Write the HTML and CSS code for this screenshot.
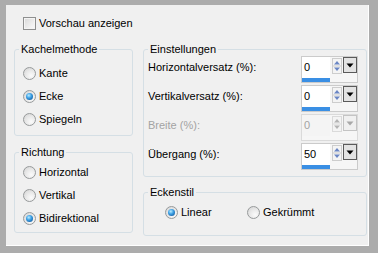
FILE: index.html
```html
<!DOCTYPE html>
<html lang="de">
<head>
<meta charset="utf-8">
<title>Kacheln</title>
<link rel="stylesheet" href="styles.css">
</head>
<body>
<div class="dialog">
  <label class="check-row"><span class="checkbox"></span>Vorschau anzeigen</label>
  <div class="columns">
    <div class="col-left">
      <fieldset class="group g-method">
        <legend>Kachelmethode</legend>
        <div class="radio-list">
          <div class="opt"><span class="radio"></span>Kante</div>
          <div class="opt"><span class="radio on"></span>Ecke</div>
          <div class="opt"><span class="radio"></span>Spiegeln</div>
        </div>
      </fieldset>
      <fieldset class="group g-dir">
        <legend>Richtung</legend>
        <div class="radio-list">
          <div class="opt"><span class="radio"></span>Horizontal</div>
          <div class="opt"><span class="radio"></span>Vertikal</div>
          <div class="opt"><span class="radio on"></span>Bidirektional</div>
        </div>
      </fieldset>
    </div>
    <div class="col-right">
      <fieldset class="group g-settings">
        <legend>Einstellungen</legend>
        <div class="settings">
          <div class="field-row">
            <span class="flabel">Horizontalversatz (%):</span>
            <div class="spin">
              <div class="num"><div class="val">0</div><div class="bar"></div></div>
              <svg class="arrows" width="10" height="16" viewBox="0 0 10 16"><rect x="0.5" y="0.5" width="9" height="15" fill="#f4f4f4" stroke="#cdcdcd"/><line x1="1" y1="8" x2="9" y2="8" stroke="#cdcdcd"/><path d="M2 6.5h6L5 3z" fill="#6a86c4"/><path d="M2 9.5h6l-3 3.5z" fill="#6a86c4"/></svg>
              <svg class="drop" width="14" height="16" viewBox="0 0 14 16"><rect x="0.5" y="0.5" width="13" height="15" fill="#e3e3e3" stroke="#5a5a5a"/><path d="M3.5 6.5h7L7 10.5z" fill="#000"/></svg>
            </div>
          </div>
          <div class="field-row">
            <span class="flabel">Vertikalversatz (%):</span>
            <div class="spin">
              <div class="num"><div class="val">0</div><div class="bar"></div></div>
              <svg class="arrows" width="10" height="16" viewBox="0 0 10 16"><rect x="0.5" y="0.5" width="9" height="15" fill="#f4f4f4" stroke="#cdcdcd"/><line x1="1" y1="8" x2="9" y2="8" stroke="#cdcdcd"/><path d="M2 6.5h6L5 3z" fill="#6a86c4"/><path d="M2 9.5h6l-3 3.5z" fill="#6a86c4"/></svg>
              <svg class="drop" width="14" height="16" viewBox="0 0 14 16"><rect x="0.5" y="0.5" width="13" height="15" fill="#e3e3e3" stroke="#5a5a5a"/><path d="M3.5 6.5h7L7 10.5z" fill="#000"/></svg>
            </div>
          </div>
          <div class="field-row disabled">
            <span class="flabel">Breite (%):</span>
            <div class="spin">
              <div class="num"><div class="val">0</div><div class="bar"></div></div>
              <svg class="arrows" width="10" height="16" viewBox="0 0 10 16"><rect x="0.5" y="0.5" width="9" height="15" fill="#f4f4f4" stroke="#dadada"/><line x1="1" y1="8" x2="9" y2="8" stroke="#dadada"/><path d="M2 6.5h6L5 3z" fill="#b4b4b4"/><path d="M2 9.5h6l-3 3.5z" fill="#b4b4b4"/></svg>
              <svg class="drop" width="14" height="16" viewBox="0 0 14 16"><rect x="0.5" y="0.5" width="13" height="15" fill="#f0f0f0" stroke="#c4c4c4"/><path d="M3.5 6.5h7L7 10.5z" fill="#a8a8a8"/></svg>
            </div>
          </div>
          <div class="field-row">
            <span class="flabel">Übergang (%):</span>
            <div class="spin">
              <div class="num"><div class="val">50</div><div class="bar"></div></div>
              <svg class="arrows" width="10" height="16" viewBox="0 0 10 16"><rect x="0.5" y="0.5" width="9" height="15" fill="#f4f4f4" stroke="#cdcdcd"/><line x1="1" y1="8" x2="9" y2="8" stroke="#cdcdcd"/><path d="M2 6.5h6L5 3z" fill="#6a86c4"/><path d="M2 9.5h6l-3 3.5z" fill="#6a86c4"/></svg>
              <svg class="drop" width="14" height="16" viewBox="0 0 14 16"><rect x="0.5" y="0.5" width="13" height="15" fill="#e3e3e3" stroke="#5a5a5a"/><path d="M3.5 6.5h7L7 10.5z" fill="#000"/></svg>
            </div>
          </div>
        </div>
      </fieldset>
      <fieldset class="group g-corner">
        <legend>Eckenstil</legend>
        <div class="corner-list">
          <div class="opt linear"><span class="radio on"></span>Linear</div>
          <div class="opt"><span class="radio"></span>Gekrümmt</div>
        </div>
      </fieldset>
    </div>
  </div>
</div>
</body>
</html>
```

FILE: styles.css
```css
* { box-sizing: border-box; }

body {
  margin: 0;
  background: #acacac;
  font-family: "Liberation Sans", Arial, sans-serif;
  font-size: 11px;
  color: #000;
  height: 253px;
}

.dialog {
  margin: 5px 0 0 6px;
  width: 363px;
  height: 241px;
  background: #f0f0f0;
  border-right: 1px solid #fff;
  border-bottom: 1px solid #fff;
  padding: 12px 0 0 8px;
}

.check-row {
  display: flex;
  align-items: center;
  gap: 3px;
  margin-left: 9px;
  height: 13px;
  line-height: 13px;
}

.checkbox {
  width: 13px;
  height: 13px;
  border: 1px solid #8e8f8f;
  background: linear-gradient(135deg, #d8d8d8 0%, #eeeeee 60%, #fbfbfb 100%);
  box-shadow: inset 0 0 0 1px #f4f4f4;
}

.columns {
  display: flex;
  gap: 10px;
  margin-top: 13px;
}

.col-left {
  width: 119px;
  display: flex;
  flex-direction: column;
  gap: 10px;
}

.col-right {
  width: 224px;
  display: flex;
  flex-direction: column;
  gap: 9px;
}

.group {
  margin: 0;
  padding: 0;
  min-width: 0;
  border: 1px solid #d5dfe5;
  border-radius: 3px;
}

.group legend {
  margin-left: 4px;
  padding: 0 2px;
  height: 13px;
  line-height: 13px;
}

.radio-list {
  display: flex;
  flex-direction: column;
  gap: 10px;
  padding-left: 8px;
}

.g-method .radio-list { padding-top: 11px; padding-bottom: 9px; }
.g-dir .radio-list { padding-top: 7px; padding-bottom: 7px; }

.opt {
  display: flex;
  align-items: center;
  gap: 3px;
  height: 13px;
  line-height: 13px;
}

.radio {
  position: relative;
  width: 13px;
  height: 13px;
  border-radius: 50%;
  border: 1px solid #979a9b;
  background: radial-gradient(circle at 65% 70%, #fbfbfb 0%, #e8e8e8 50%, #d2d2d2 100%);
  flex: none;
}

.radio.on::after {
  content: "";
  position: absolute;
  left: 2px;
  top: 2px;
  width: 7px;
  height: 7px;
  border-radius: 50%;
  background: radial-gradient(circle at 40% 35%, #b9ecff 0%, #3fa2e6 40%, #1763a8 80%, #0f4a82 100%);
}

.settings {
  display: flex;
  flex-direction: column;
  gap: 2px;
  padding: 0 8px 6px 4px;
}

.field-row {
  display: flex;
  justify-content: space-between;
  align-items: flex-start;
  height: 27px;
}

.flabel {
  padding-top: 5px;
  line-height: 13px;
}

.spin {
  display: flex;
  align-items: flex-start;
  width: 57px;
  height: 27px;
  border: 1px solid #cbcbcb;
  background: #f6f6f6;
}

.num {
  width: 28px;
  display: flex;
  flex-direction: column;
}

.val {
  height: 21px;
  line-height: 21px;
  padding-left: 2px;
  background: #fff;
}

.bar {
  height: 4px;
  background: #3a8fe4;
}

.arrows {
  margin-left: 2px;
  margin-top: 1px;
  display: block;
}

.drop {
  margin-left: 1px;
  display: block;
}

.disabled .flabel,
.disabled .val {
  color: #a3a3a3;
}

.disabled .spin {
  border-color: #dadada;
}

.disabled .val {
  background: #f4f4f4;
}

.disabled .bar {
  background: transparent;
}

.corner-list {
  display: flex;
  padding: 7px 0 16px 21px;
}

.opt.linear {
  width: 82px;
}
```
